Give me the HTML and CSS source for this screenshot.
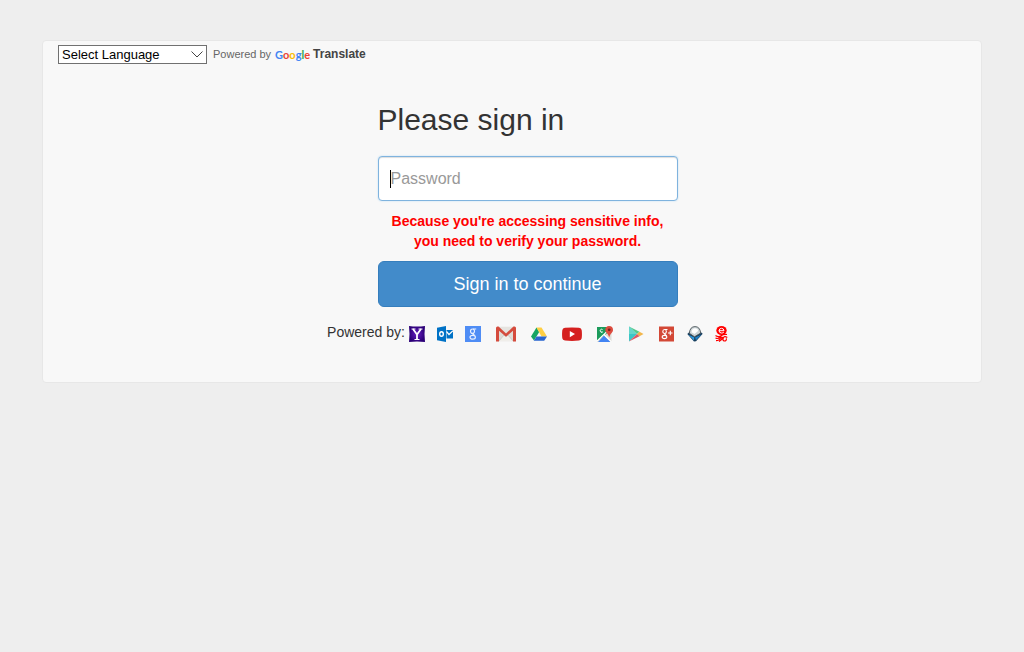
FILE: index.html
```html
<!DOCTYPE html>
<html lang="en">
<head>
<meta charset="utf-8">
<meta name="viewport" content="width=device-width, initial-scale=1">
<title>Please sign in</title>
<link rel="stylesheet" href="styles.css">
</head>
<body>
<main class="panel">
  <div class="translate">
    <div class="language">
      <select class="language-select" aria-label="Language">
        <option>Select Language</option>
      </select>
      <svg class="language-arrow" viewBox="0 0 12 7" aria-hidden="true"><path d="M.5.5 6 6 11.5.5" fill="none" stroke="#444"/></svg>
    </div>
    <span class="translate-by">Powered by</span>
    <a class="translate-link" href="#"><span class="google"><span class="blue">G</span><span class="red">o</span><span class="yellow">o</span><span class="blue">g</span><span class="green">l</span><span class="red">e</span></span>Translate</a>
  </div>

  <div class="content">
    <form class="signin">
      <h1 class="title">Please sign in</h1>
      <div class="field">
        <input class="password" type="password" placeholder="Password" aria-label="Password">
        <span class="caret"></span>
      </div>
      <p class="warning">Because you're accessing sensitive info, you need to verify your password.</p>
      <button class="submit" type="submit">Sign in to continue</button>
    </form>

    <div class="providers">
      <span class="providers-label">Powered by:</span>
      <svg class="icon first" viewBox="0 0 16 16" role="img" aria-label="Yahoo">
        <defs><radialGradient id="yahoo"><stop offset="0" stop-color="#6a1fc4"/><stop offset="1" stop-color="#2c0078"/></radialGradient></defs>
        <path d="M0 0q8 1 16 0-1 8 0 16-8-1-16 0 1-8 0-16z" fill="url(#yahoo)"/>
        <path d="M2.500 3h4M9.500 3h4M5.500 13.500h5" stroke="#fff"/>
        <path d="M4 3 8 8.500 12 3M8 8v5.500" fill="none" stroke="#fff" stroke-width="1.800"/>
      </svg>
      <svg class="icon" viewBox="0 0 16 16" role="img" aria-label="Outlook">
        <path d="M0 1.800 9 0v16l-9-1.800z" fill="#0072c6"/>
        <path d="M9.500 4H16v8.500H9.500z" fill="#0072c6"/>
        <path d="m9.500 5.500 2.500 3L16 4.700" fill="none" stroke="#fff" stroke-width="1.200"/>
        <ellipse cx="4.500" cy="8" rx="1.800" ry="2.300" fill="none" stroke="#fff" stroke-width="1.400"/>
      </svg>
      <svg class="icon" viewBox="0 0 16 16" role="img" aria-label="Google">
        <path d="M0 0h16v16H0z" fill="#4f8df5"/>
        <g fill="none" stroke="#e8f0ff" stroke-width="1.200"><ellipse cx="7.500" cy="5.200" rx="2" ry="2.200"/><path d="M8 3h3.200M8.500 7.300c-2 .8.500 1.300 1.500 2.400"/><ellipse cx="7.700" cy="11.300" rx="2.700" ry="1.900"/></g>
      </svg>
      <svg class="icon wide spaced" viewBox="0 0 20 16" role="img" aria-label="Gmail">
        <path d="M1 .8h18v14.400H1z" fill="#dedcd7"/>
        <path d="m3 15 5-6 2 1.500L12 9l5 6" fill="#f0eeea" stroke="#bbb" stroke-width=".6"/>
        <path d="M3 1h14l-7 6z" fill="#e6e4e0"/>
        <path d="M0 2Q0 .5 1.500.5h1L10 7.500 17.500.5h1Q20 .5 20 2v13.500h-3V4.800l-7 6-7-6v10.700H0z" fill="#d54b3d"/>
      </svg>
      <svg class="icon spaced" viewBox="0 0 16 16" role="img" aria-label="Google Drive">
        <path d="M5.500 1.500 8.200 6 3 14.500 0 10.500z" fill="#16a463"/>
        <path d="M5.500 1.500h5l5.500 9h-5.500z" fill="#ffcf43"/>
        <path d="M5.500 10.500H16l-2.800 4.300H2.800z" fill="#2a66d0"/>
      </svg>
      <svg class="icon wide spaced" viewBox="0 0 20 16" role="img" aria-label="YouTube">
        <path d="M3 1.800q7-.8 14 0 2.500.2 2.700 2.500.5 4 0 8-.2 2-2.700 2.300-7 .7-14 0-2.500-.3-2.700-2.300-.5-4 0-8Q.5 2 3 1.800z" fill="#d5201f"/>
        <path d="M7.800 5v6.200L13 8.100z" fill="#fff"/>
      </svg>
      <svg class="icon spaced" viewBox="0 0 16 16" role="img" aria-label="Google Maps">
        <path d="M0 1h14.500v15H0z" fill="#dedcd6"/>
        <path d="M0 1h11v5.500L0 15z" fill="#1c9b5b"/>
        <path d="m1 16 6-6.500L13.500 16z" fill="#4284f3"/>
        <path d="m0 15 9.500-9M7 8.500l7.500 7.500" stroke="#fff" stroke-width="1.100" fill="none"/>
        <path d="M5.500 3.500a1.500 1.500 0 1 0 0 2.500H4.300" stroke="#fff" fill="none"/>
        <path d="M12 0a4 4 0 0 1 4 4c0 2.500-3 3.500-3.800 7.500C11.500 7.500 8.300 6.500 8.300 4A4 4 0 0 1 12 0z" fill="#dd4b3e"/>
        <circle cx="12.200" cy="3.800" r="1.400" fill="#7c231c"/>
      </svg>
      <svg class="icon spaced" viewBox="0 0 16 16" role="img" aria-label="Google Play">
        <path d="M1 .5v15L9 8z" fill="#3cc6c7"/>
        <path d="m1 .5 10.500 5.200L9 8z" fill="#55c98b"/>
        <path d="m11.500 5.700 4 2.300-4 2.300L9 8z" fill="#f2b64c"/>
        <path d="M1 15.500 9 8l2.500 2.300z" fill="#de5964"/>
        <path d="M1 .5v7.500h8z" fill="#66d6cb"/>
      </svg>
      <svg class="icon spaced" viewBox="0 0 16 16" role="img" aria-label="Google Plus">
        <path d="M0 .5h15v15H0z" fill="#d34836"/>
        <g fill="none" stroke="#fff" stroke-width="1.100"><ellipse cx="5.600" cy="5.500" rx="1.800" ry="2"/><path d="M6 3.500h2.500M6.300 7.500c-1.500.6.400 1.200 1.300 2"/><ellipse cx="5.500" cy="11" rx="2.300" ry="1.600"/><path d="M9 7h4.500M11.300 4.800v4.400"/></g>
      </svg>
      <svg class="icon" viewBox="0 0 16 16" role="img" aria-label="Mail">
        <path d="M.3 8 3 5.500h10l2.700 2.300L9 15.200 7 15.500z" fill="#193e5d"/>
        <path d="m1.500 8.800 5.800 2.700-.3 3z" fill="#2d9be0"/>
        <path d="m8 11.500 6.500-3-5.500 5.800z" fill="#2280c4"/>
        <path d="M2.300 7.300Q3 .6 8 .6t5.700 6.500L7.500 10.800z" fill="#cdd5d8" stroke="#4b5559" stroke-width=".9"/>
        <path d="M4.500 6.300Q5 2.300 8 2.300T11 5L7.500 8z" fill="#fff"/>
      </svg>
      <svg class="icon narrow" viewBox="0 0 13 16" role="img" aria-label="Webmail">
        <ellipse cx="6.500" cy="4.500" rx="5.200" ry="4.500" fill="#f00"/>
        <path d="M4 4.700h5Q8.700 2.300 6.500 2.300T4 4.700q.2 2.300 2.500 2.300 1.500 0 2.300-.8" fill="none" stroke="#fff"/>
        <path d="M.5 9.500q3 2 5.500.3T12 8.500M.5 12q3 1.500 5.500-1.500M1 14.700q3.500 0 6-4M4 15.500q3-1.500 4-4.500M12.300 11.500q-3-2-4 .5t1 3q2.500 0 2-2.700" fill="none" stroke="#f00" stroke-width="1.200"/>
      </svg>
    </div>
  </div>
</main>
</body>
</html>
```
FILE: styles.css
```css
* { box-sizing: border-box; }

body {
  margin: 0;
  padding: 40px 42px;
  background: #eee;
  color: #333;
  font: 14px/20px "Liberation Sans", Arial, sans-serif;
}

.panel {
  max-width: 940px;
  margin: 0 auto;
  padding: 4px 0 40px 15px;
  background: #f8f8f8;
  border: 1px solid #e7e7e7;
  border-radius: 4px;
}

.translate {
  display: flex;
  align-items: center;
  color: #666;
  font-size: 11px;
  line-height: 19px;
}

.language {
  position: relative;
  display: flex;
  margin-right: 6px;
}

.language-select {
  width: 149px;
  height: 19px;
  padding: 0 3px;
  appearance: none;
  background: #fff;
  border: 1px solid #707070;
  border-radius: 0;
  color: #000;
  font: 13px/17px "Liberation Sans", Arial, sans-serif;
}

.language-arrow {
  position: absolute;
  top: 6px;
  right: 4px;
  width: 12px;
  height: 7px;
  pointer-events: none;
}

.translate-by { margin-right: 4px; }

.translate-link {
  display: flex;
  align-items: center;
  gap: 3px;
  color: #444;
  font-size: 12px;
  font-weight: bold;
  text-decoration: none;
}

.google {
  font-family: Lato, sans-serif;
  font-size: 11px;
}

.blue { color: #4285f4; }
.red { color: #ea4335; }
.yellow { color: #fbbc05; }
.green { color: #34a853; }

.content {
  display: flex;
  flex-direction: column;
  align-items: center;
  padding: 39px 0 0 16px;
}

.signin {
  width: 100%;
  max-width: 300px;
}

.title {
  margin: 0 0 20px;
  font-size: 30px;
  font-weight: normal;
  line-height: 33px;
}

.field { position: relative; }

.password {
  display: block;
  width: 100%;
  height: 45px;
  padding: 10px 12px;
  background: #fff;
  border: 1px solid #7fb3de;
  border-radius: 4px;
  box-shadow: inset 0 1px 1px #dedede, 0 0 2px #b9dcf5;
  color: #333;
  font: 16px/23px "Liberation Sans", Arial, sans-serif;
  outline: none;
}

.password::placeholder { color: #999; }

.caret {
  position: absolute;
  top: 14px;
  left: 12px;
  width: 1px;
  height: 18px;
  background: #000;
}

.warning {
  margin: 10px 0;
  color: #f00;
  font-weight: bold;
  text-align: center;
}

.submit {
  display: block;
  width: 100%;
  height: 46px;
  padding: 0 16px;
  background: #428bca;
  border: 1px solid #357ebd;
  border-radius: 6px;
  color: #fff;
  font: 18px/24px "Liberation Sans", Arial, sans-serif;
}

.providers {
  display: flex;
  align-items: flex-end;
  margin-top: 15px;
}

.icon {
  width: 16px;
  height: 16px;
  margin-left: 12px;
}

.icon.first { margin-left: 4px; }
.icon.wide { width: 20px; }
.icon.narrow { width: 13px; }
.icon.spaced { margin-left: 15px; }
```
